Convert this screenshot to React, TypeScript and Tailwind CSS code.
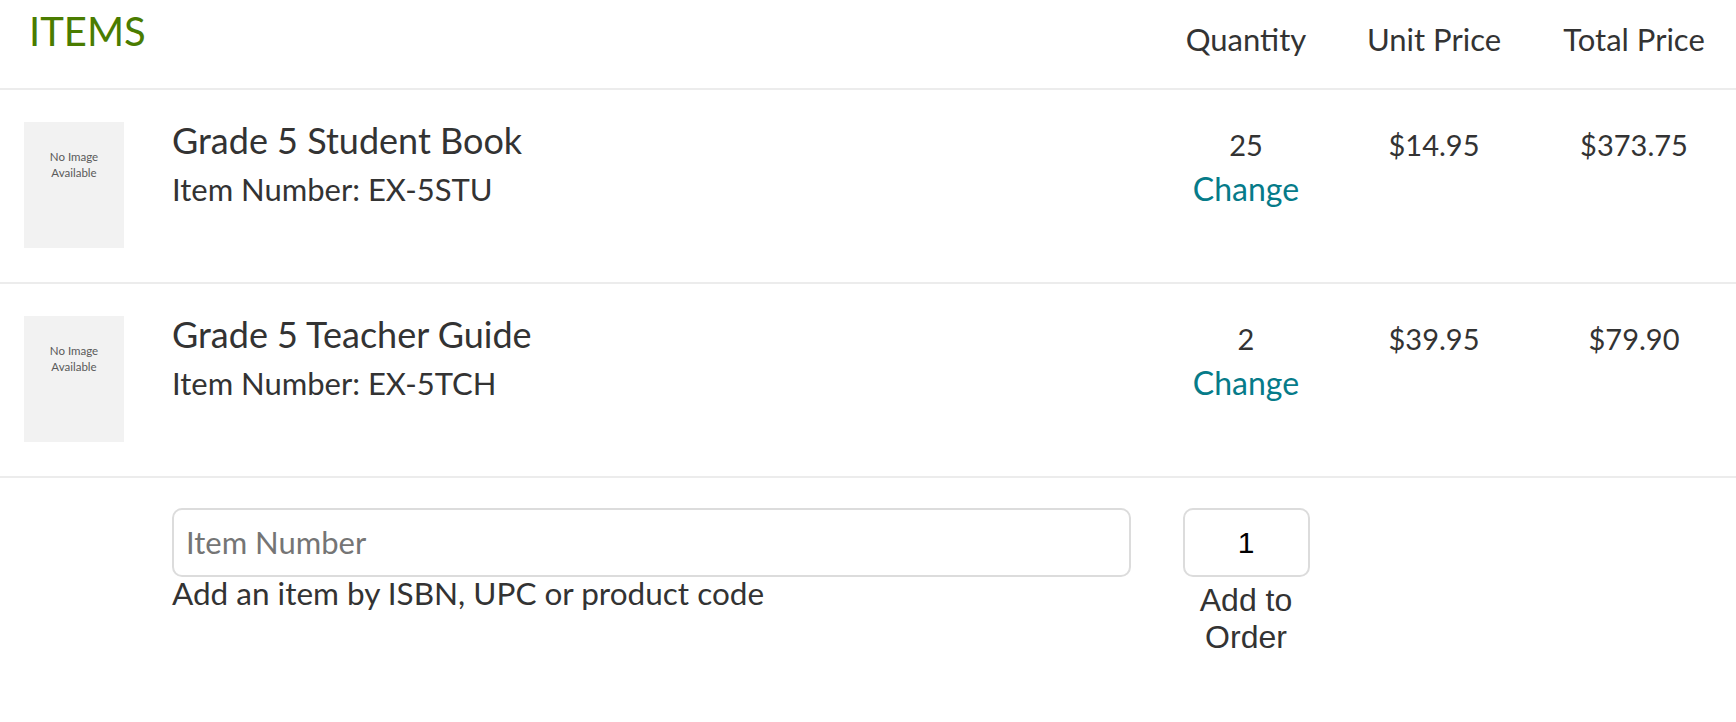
import React from "react";

const sans = { fontFamily: "Lato, 'Noto Sans', sans-serif" };

type Item = { title: string; num: string; qty: number; unit: string; total: string };

const items: Item[] = [
  { title: "Grade 5 Student Book", num: "EX-5STU", qty: 25, unit: "$14.95", total: "$373.75" },
  { title: "Grade 5 Teacher Guide", num: "EX-5TCH", qty: 2, unit: "$39.95", total: "$79.90" },
];

function NoImage() {
  return (
    <div className="w-[100px] h-[126px] bg-[#f2f2f2] flex flex-col items-center pt-[27px] shrink-0">
      <span className="text-[11.5px] leading-[16px] text-[#5a5a5a] font-['Lato',sans-serif]">No Image</span>
      <span className="text-[11.5px] leading-[16px] text-[#5a5a5a] font-['Lato',sans-serif]">Available</span>
    </div>
  );
}

export default function App() {
  return (
    <div className="w-[1736px] h-[722px] bg-white text-[#333] font-['Lato',sans-serif]" style={sans}>
      {/* header */}
      <div className="flex h-[88px] border-b-2 border-[#ececec] box-content">
        <div className="flex-1 pl-[29px] pt-[7px]">
          <span className="text-[40px] leading-[48px] text-[#4a7c00]">ITEMS</span>
        </div>
        <div className="w-[176px] text-center pt-[21px] text-[31px] leading-[37px]">Quantity</div>
        <div className="w-[200px] text-center pt-[21px] text-[31px] leading-[37px]">Unit Price</div>
        <div className="w-[200px] text-center pt-[21px] text-[31px] leading-[37px]">Total Price</div>
        <div className="w-[2px]" />
      </div>

      {items.map((it) => (
        <div key={it.num} className="flex h-[192px] border-b-2 border-[#ececec] box-content">
          <div className="pl-[24px] pt-[32px]">
            <NoImage />
          </div>
          <div className="flex-1 pl-[48px] pt-[28px]">
            <div className="text-[36px] leading-[44px]">{it.title}</div>
            <div className="mt-[9px] text-[31px] leading-[37px]">Item Number: {it.num}</div>
          </div>
          <div className="w-[176px] flex flex-col items-center pt-[37px]">
            <div className="text-[29px] leading-[35px]">{it.qty}</div>
            <div className="mt-[8px] text-[32px] leading-[38px] text-[#067b89]">Change</div>
          </div>
          <div className="w-[200px] text-center pt-[37px] text-[29px] leading-[35px]">{it.unit}</div>
          <div className="w-[200px] text-center pt-[37px] text-[29px] leading-[35px]">{it.total}</div>
          <div className="w-[2px]" />
        </div>
      ))}

      {/* add item */}
      <div className="flex pt-[30px]">
        <div className="w-[172px] shrink-0" />
        <div className="w-[959px] shrink-0">
          <div className="h-[69px] border-2 border-[#dcdcdc] rounded-[10px] flex items-center pl-[12px]">
            <span className="text-[31px] leading-[37px] text-[#757575]">Item Number</span>
          </div>
          <div className="text-[31.5px] leading-[32px]">Add an item by ISBN, UPC or product code</div>
        </div>
        <div className="w-[27px] shrink-0" />
        <div className="w-[176px] flex flex-col items-center">
          <div className="w-[127px] h-[69px] border-2 border-[#dcdcdc] rounded-[10px] flex items-center justify-center">
            <span className="text-[30px] text-black font-['Liberation_Sans',Arial,sans-serif]">1</span>
          </div>
          <div className="w-[128px] mt-[5px] text-center text-[32px] leading-[36.8px] text-[#333] font-['Liberation_Sans',Arial,sans-serif]">
            Add to Order
          </div>
        </div>
      </div>
    </div>
  );
}
